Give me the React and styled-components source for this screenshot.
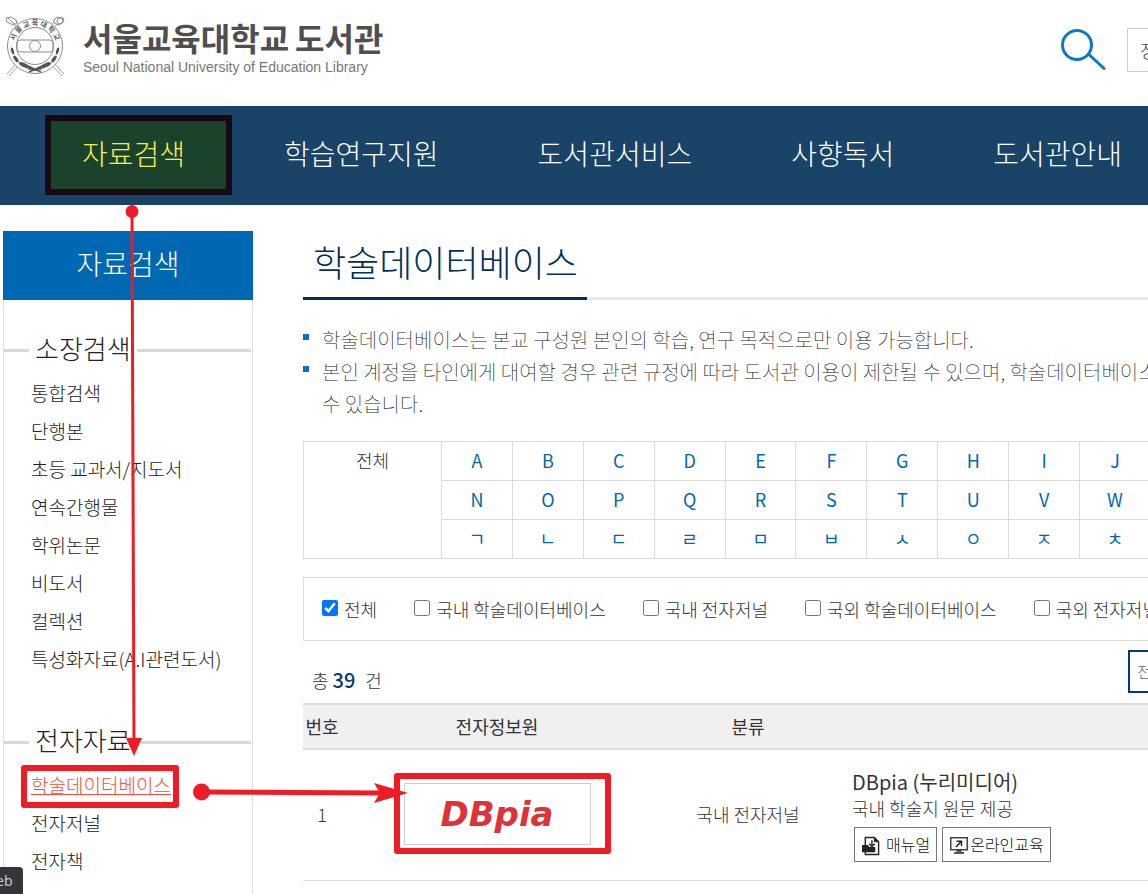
import React from "react";
import styled, { createGlobalStyle, css } from "styled-components";

const GlobalStyle = createGlobalStyle`
  *, *::before, *::after { box-sizing: border-box; }
  body {
    margin: 0;
    overflow-x: hidden;
    background: #fff;
    color: #333;
    font-family: "Noto Sans CJK KR", "Noto Sans", sans-serif;
    font-size: 18px;
    font-weight: 300;
    line-height: 26px;
  }
  a { color: inherit; text-decoration: none; }
  h1, h2, h3, p, ul { margin: 0; padding: 0; font-weight: inherit; }
  ul { list-style: none; }
  input, button { font: inherit; }
`;

const Page = styled.div`
  position: relative;
  display: flex;
  flex-direction: column;
  min-height: 100vh;
  overflow: hidden;
`;

const Header = styled.header`
  display: flex;
  align-items: center;
  height: 106px;
  padding-left: 4px;
`;

const Brand = styled.a`
  display: flex;
  align-items: center;
  gap: 16px;
  margin-bottom: 14px;
  color: #4f4f4f;
`;

const BrandName = styled.div`
  display: flex;
  gap: 6px;
  margin-bottom: 2px;
  font-size: 32px;
  font-weight: 700;
  line-height: 40px;
  white-space: nowrap;
`;

const BrandSub = styled.div`
  font-family: "Liberation Sans", sans-serif;
  font-size: 14px;
  font-weight: 400;
  line-height: 16px;
  color: #777;
  white-space: nowrap;
`;

const HeaderSearch = styled.form`
  display: flex;
  align-items: center;
  gap: 21px;
  margin: 0 0 6px auto;
`;

const IconButton = styled.button`
  display: flex;
  padding: 0;
  border: 0;
  background: none;
`;

const EdgeInput = styled.input`
  width: 21px;
  height: 44px;
  padding: 0 0 0 12px;
  border: 1px solid #ccc;
  border-right: 0;
  border-radius: 0;
  background: #fff;
  color: #444;
  outline: 0;
  &::placeholder { color: #666; opacity: 1; }
  ${(p) =>
    p.$strong &&
    css`
      width: 20px;
      height: 43px;
      padding-left: 7px;
      border: 2px solid #003c71;
      border-right: 0;
      font-size: 16px;
    `}
`;

const Nav = styled.nav`
  display: flex;
  align-items: center;
  gap: 99px;
  height: 99px;
  padding: 0 0 6px 82px;
  background: #1a4368;
`;

const NavLink = styled.a`
  position: relative;
  flex: none;
  font-size: 28px;
  line-height: 40px;
  color: ${(p) => (p.$active ? "#f3ee55" : "#fff")};
`;

const Highlight = styled.span`
  position: absolute;
  inset: -18px -47px -22px -37px;
  border: 6px solid #170911;
  background: #1b432c;
`;

const NavText = styled.span`
  position: relative;
`;

const Body = styled.div`
  display: flex;
  flex: 1;
  gap: 50px;
  padding: 26px 0 0 3px;
`;

const Sidebar = styled.aside`
  flex: none;
  width: 250px;
  border: 1px solid #ddd;
  border-width: 0 1px;
`;

const SideTitle = styled.h2`
  height: 69px;
  margin: 0 -1px 28px;
  background: #0067b3;
  color: #fff;
  font-size: 28px;
  line-height: 65px;
  text-align: center;
`;

const SideGroup = styled.section`
  margin-bottom: 42px;
`;

const SideHeading = styled.h3`
  display: flex;
  align-items: center;
  gap: 6px;
  padding-right: 1px;
  margin-bottom: 6px;
  font-size: 26px;
  line-height: 40px;
  color: #222;
  &::before, &::after {
    content: "";
    height: 3px;
    margin-top: 5px;
    background: #d8d8d8;
  }
  &::before { width: 25px; }
  &::after { flex: 1; }
`;

const SideItem = styled.li`
  padding-left: 27px;
  font-size: 19px;
  line-height: 38px;
  color: ${(p) => (p.$active ? "#f2503a" : "#222")};
  text-decoration: ${(p) => (p.$active ? "underline" : "none")};
  white-space: nowrap;
  a { text-decoration: inherit; }
`;

const Main = styled.main`
  flex: 1;
  min-width: 0;
`;

const Heading = styled.h1`
  display: flex;
  margin-bottom: 24px;
  border-bottom: 3px solid #e6eaee;
  font-size: 36px;
  line-height: 52px;
  color: #00305a;
  span {
    margin-bottom: -3px;
    padding: 4px 9px 10px 10px;
    border-bottom: 3px solid #00305a;
  }
`;

const Notes = styled.ul`
  margin-bottom: 21px;
  font-size: 20px;
  font-weight: 100;
  line-height: 32px;
  color: #111;
`;

const Note = styled.li`
  display: flex;
  gap: 13px;
  white-space: nowrap;
  &::before {
    content: "";
    flex: none;
    width: 6px;
    height: 6px;
    margin-top: 10px;
    background: #0075c2;
  }
`;

const IndexTable = styled.table`
  width: 848px;
  table-layout: fixed;
  border-collapse: collapse;
  td {
    height: 39px;
    padding: 0;
    border: 1px solid #ddd;
    text-align: center;
    vertical-align: top;
    line-height: 36px;
    color: #0067b3;
    font-weight: 400;
  }
  td:first-child[rowspan] { color: #333; font-weight: 300; }
`;

const Filters = styled.div`
  display: flex;
  align-items: center;
  gap: 37px;
  height: 64px;
  margin-top: 18px;
  padding-left: 18px;
  border: 1px solid #ddd;
  border-right: 0;
  overflow: hidden;
`;

const Check = styled.label`
  display: flex;
  flex: none;
  align-items: center;
  gap: 6px;
  margin-bottom: 1px;
  white-space: nowrap;
  input { width: 16px; height: 16px; margin: 0 0 1px; accent-color: #0075ff; }
`;

const Summary = styled.div`
  display: flex;
  align-items: center;
  justify-content: space-between;
  height: 62px;
  padding: 0 0 2px 9px;
`;

const Total = styled.p`
  margin-top: 18px;
  strong {
    margin-right: 6px;
    font-size: 20px;
    font-weight: 500;
    color: #003c71;
  }
`;

const ResultTable = styled.table`
  width: 100%;
  table-layout: fixed;
  border-spacing: 0;
  th {
    height: 47px;
    padding: 0 0 2px;
    border: 2px solid #ddd;
    border-width: 2px 0;
    background: #f0f0f0;
    color: #333;
    font-weight: 400;
  }
  td {
    height: 131px;
    padding: 0 0 2px;
    border-bottom: 1px solid #ddd;
    text-align: center;
  }
  td:last-child { padding: 0 0 0 9px; text-align: left; }
`;

const Provider = styled.a`
  display: flex;
  align-items: center;
  justify-content: center;
  width: 187px;
  height: 62px;
  margin: 0 auto;
  border: 1px solid #ccc;
  color: #dd3338;
  font: italic 700 34px/40px "DejaVu Sans", sans-serif;
`;

const ItemTitle = styled.a`
  display: block;
  font-size: 20px;
  font-weight: 400;
  color: #333;
  line-height: 28px;
`;

const ItemNote = styled.p`
  line-height: 24px;
`;

const Actions = styled.div`
  display: flex;
  gap: 5px;
  margin: 7px 0 0 2px;
`;

const Action = styled.button`
  display: flex;
  align-items: center;
  gap: ${(p) => (p.$spaced ? "6px" : "2px")};
  height: 35px;
  padding: 0 6px 0 7px;
  border: 1px solid #777;
  background: #fff;
  color: #111;
  font-size: 16px;
  font-weight: 300;
  line-height: 24px;
  white-space: nowrap;
  svg { margin-top: 2px; }
  span { margin-bottom: 1px; }
`;

const StatusTip = styled.div`
  position: fixed;
  left: -4px;
  bottom: 0;
  height: 27px;
  padding: 0 10px 0 0;
  border-radius: 0 4px 0 0;
  background: #35363a;
  color: #c4c8cc;
  font: 400 14px/27px "Noto Sans", sans-serif;
`;

const Marks = styled.svg`
  position: absolute;
  left: 0;
  top: 0;
  pointer-events: none;
`;

const Emblem = () => (
  <svg width="63" height="62" viewBox="0 0 63 62" fill="none" stroke="#8c8c8c" aria-hidden="true">
    <path d="M3 59 L50 7 M5 61 L53 9 M60 59 L13 7 M58 61 L10 9" strokeWidth=".8" />
    <circle cx="31" cy="31" r="27.5" fill="#fff" />
    <path d="M13 8 L9 10 L3 7 L2 3 L7 2 L12 5Z M4 3 L10 9 M50 8 L55 10 L60 6 L59 3 L53 2 L50 5Z" />
    <circle cx="56" cy="6" r="3" />
    <circle cx="31" cy="31" r="18.5" />
    <path d="M16 25 H46 Q49 25 49 28 V34 Q49 37 46 37 H16 Q13 37 13 34 V28 Q13 25 16 25Z" />
    <circle cx="31" cy="31" r="5.5" />
    <g fill="#555" stroke="none">
      <ellipse cx="8.5" cy="36" rx="1.4" ry="3.5" transform="rotate(-15 8.5 36)" />
      <ellipse cx="12" cy="44" rx="1.7" ry="4" transform="rotate(-35 12 44)" />
      <ellipse cx="53.5" cy="36" rx="1.4" ry="3.5" transform="rotate(15 53.5 36)" />
      <ellipse cx="50" cy="44" rx="1.7" ry="4" transform="rotate(35 50 44)" />
      <ellipse cx="20" cy="50" rx="5" ry="2" transform="rotate(25 20 50)" />
      <ellipse cx="42" cy="50" rx="5" ry="2" transform="rotate(-25 42 50)" />
    </g>
    <path d="M15 48 Q22 55 38 54 M47 48 Q40 55 24 54 M24 51 L37 57 M38 51 L25 57" stroke="#555" strokeWidth="1.5" />
    <path id="ring" d="M10.500 36 A21 21 0 1 1 51.500 36" stroke="none" />
    <text fill="#555" stroke="none" fontSize="7" fontWeight="700">
      <textPath href="#ring" startOffset="50%" textAnchor="middle">서 울 교 육 대 학 교</textPath>
    </text>
  </svg>
);

const SearchIcon = () => (
  <svg width="45" height="42" viewBox="0 0 45 42" fill="none" stroke="#0b78c4" strokeWidth="3" strokeLinecap="round">
    <circle cx="16" cy="16" r="14.5" />
    <path d="M28 25.5 L43 39.5" />
  </svg>
);

const ManualIcon = () => (
  <svg width="18" height="20" viewBox="0 0 19 20" fill="none" stroke="#222" strokeWidth="1.5">
    <path d="M3.5 9 V1 H13 L17.5 5.5 V19 H3.5 V16" />
    <path d="M13 1 V5.5 H17.5 Z" fill="#222" strokeWidth="1" />
    <path d="M0 9 H6 L8 11 H14 V16.5 H0Z" fill="#222" stroke="none" />
    <path d="M10.5 4 V10" stroke="#222" />
    <path d="M7.5 7.5 L10.5 10.5 L13.5 7.5" />
  </svg>
);

const ScreenIcon = () => (
  <svg width="18" height="17" viewBox="0 0 18 17" fill="none" stroke="#444" strokeWidth="1.5">
    <rect x=".75" y=".75" width="16.5" height="12" />
    <path d="M6 10 L11 4.5 M6.5 4.2 H11.5 V9" stroke="#222" />
    <path d="M6.5 14 H11.5 M4 16 H14" stroke="#222" />
  </svg>
);

const NAV = ["자료검색", "학습연구지원", "도서관서비스", "사향독서", "도서관안내"];
const GROUPS = [
  { title: "소장검색", items: ["통합검색", "단행본", "초등 교과서/지도서", "연속간행물", "학위논문", "비도서", "컬렉션", "특성화자료(A.I관련도서)"] },
  { title: "전자자료", items: ["학술데이터베이스", "전자저널", "전자책"] },
];
const INDEX = ["ABCDEFGHIJ", "NOPQRSTUVW", "ㄱㄴㄷㄹㅁㅂㅅㅇㅈㅊ"];
const FILTERS = ["전체", "국내 학술데이터베이스", "국내 전자저널", "국외 학술데이터베이스", "국외 전자저널"];

export default function App() {
  return (
    <>
      <GlobalStyle />
      <Page>
        <Header>
          <Brand href="#">
            <Emblem />
            <div>
              <BrandName>
                <span>서울교육대학교</span>
                <span>도서관</span>
              </BrandName>
              <BrandSub>Seoul National University of Education Library</BrandSub>
            </div>
          </Brand>
          <HeaderSearch>
            <IconButton type="button" aria-label="검색">
              <SearchIcon />
            </IconButton>
            <EdgeInput aria-label="검색어" defaultValue="정" />
          </HeaderSearch>
        </Header>

        <Nav>
          {NAV.map((label, i) => (
            <NavLink href="#" key={label} $active={i === 0}>
              {i === 0 && <Highlight />}
              <NavText>{label}</NavText>
            </NavLink>
          ))}
        </Nav>

        <Body>
          <Sidebar>
            <SideTitle>자료검색</SideTitle>
            {GROUPS.map((group) => (
              <SideGroup key={group.title}>
                <SideHeading>{group.title}</SideHeading>
                <ul>
                  {group.items.map((item) => (
                    <SideItem key={item} $active={item === "학술데이터베이스"}>
                      <a href="#">{item}</a>
                    </SideItem>
                  ))}
                </ul>
              </SideGroup>
            ))}
          </Sidebar>

          <Main>
            <Heading>
              <span>학술데이터베이스</span>
            </Heading>
            <Notes>
              <Note>학술데이터베이스는 본교 구성원 본인의 학습, 연구 목적으로만 이용 가능합니다.</Note>
              <Note>
                <p>
                  본인 계정을 타인에게 대여할 경우 관련 규정에 따라 도서관 이용이 제한될 수 있으며, 학술데이터베이스
                  <br />수 있습니다.
                </p>
              </Note>
            </Notes>

            <IndexTable>
              <colgroup>
                <col style={{ width: 138 }} />
              </colgroup>
              <tbody>
                {INDEX.map((row, r) => (
                  <tr key={row}>
                    {r === 0 && <td rowSpan={3}><a href="#">전체</a></td>}
                    {[...row].map((ch) => (
                      <td key={ch}><a href="#">{ch}</a></td>
                    ))}
                  </tr>
                ))}
              </tbody>
            </IndexTable>

            <Filters>
              {FILTERS.map((label, i) => (
                <Check key={label}>
                  <input type="checkbox" defaultChecked={i === 0} />
                  {label}
                </Check>
              ))}
            </Filters>

            <Summary>
              <Total>
                총 <strong>39</strong> 건
              </Total>
              <EdgeInput $strong aria-label="결과 내 검색" placeholder="전" />
            </Summary>

            <ResultTable>
              <colgroup>
                <col style={{ width: 38 }} />
                <col style={{ width: 312 }} />
                <col style={{ width: 190 }} />
                <col />
              </colgroup>
              <thead>
                <tr>
                  <th>번호</th>
                  <th>전자정보원</th>
                  <th>분류</th>
                  <th aria-label="상세" />
                </tr>
              </thead>
              <tbody>
                <tr>
                  <td>1</td>
                  <td><Provider href="#">DBpia</Provider></td>
                  <td>국내 전자저널</td>
                  <td>
                    <ItemTitle href="#">DBpia (누리미디어)</ItemTitle>
                    <ItemNote>국내 학술지 원문 제공</ItemNote>
                    <Actions>
                      <Action type="button" $spaced><ManualIcon /><span>매뉴얼</span></Action>
                      <Action type="button"><ScreenIcon /><span>온라인교육</span></Action>
                    </Actions>
                  </td>
                </tr>
              </tbody>
            </ResultTable>
          </Main>
        </Body>

        <Marks width="620" height="870" viewBox="0 0 620 870" fill="none" stroke="#ee1c25" aria-hidden="true">
          <path d="M132 211 L134 742" strokeWidth="3" />
          <path d="M201 792 L382 793" strokeWidth="5" />
          <g fill="#ee1c25" stroke="none">
            <circle cx="132" cy="211.500" r="6.500" />
            <path d="M126 738 H142 L134 756Z" />
            <circle cx="201.500" cy="792" r="8.500" />
            <path d="M374 783 L408 793 L374 803 L380 793Z" />
          </g>
          <g strokeWidth="6" strokeLinejoin="round">
            <rect x="24" y="768" width="152" height="37" />
            <rect x="397" y="776" width="211" height="75" />
          </g>
        </Marks>
        <StatusTip>eb</StatusTip>
      </Page>
    </>
  );
}
